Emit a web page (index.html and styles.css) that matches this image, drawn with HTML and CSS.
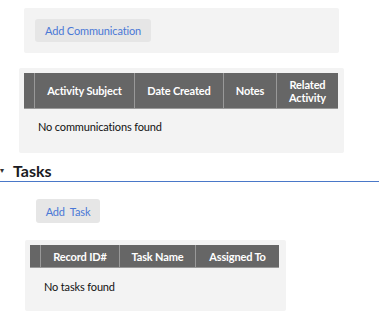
FILE: index.html
```html
<!DOCTYPE html>
<html>

<head>
    <link rel="stylesheet" href="styles.css">
</head>

<body>
    <div class="panel comm-actions">
        <button class="btn-add">Add Communication</button>
    </div>

    <div class="panel comm-table">
        <table class="grid">
            <tr class="grid-head">
                <th class="col-sel"></th>
                <th class="col-subject">Activity Subject</th>
                <th class="col-date">Date Created</th>
                <th class="col-notes">Notes</th>
                <th class="col-related">Related<br>Activity</th>
            </tr>
        </table>
        <div class="empty">No communications found</div>
    </div>

    <div class="section-title">
        <span class="caret">&#9662;</span>
        <span class="title-text">Tasks</span>
    </div>

    <div class="task-actions">
        <button class="btn-add">Add&nbsp; Task</button>
    </div>

    <div class="panel task-table">
        <table class="grid">
            <tr class="grid-head">
                <th class="col-sel"></th>
                <th class="col-record">Record ID#</th>
                <th class="col-name">Task Name</th>
                <th class="col-assigned">Assigned To</th>
            </tr>
        </table>
        <div class="empty">No tasks found</div>
    </div>
</body>

</html>
```

FILE: styles.css
```css
body {
    margin: 0;
    font-family: Lato, "Noto Sans", sans-serif;
    font-size: 11px;
    letter-spacing: -0.15px;
    color: #222;
    background: #fff;
}

.panel {
    background-color: #f3f3f3;
    border-radius: 2px;
}

.comm-actions {
    margin: 8px 0 0 24px;
    width: 315px;
    height: 45px;
    padding: 11px;
    box-sizing: border-box;
}

.btn-add {
    height: 23px;
    padding: 0 9px;
    border: none;
    border-radius: 3px;
    background-color: #e6e6e6;
    color: #4a78d6;
    font-family: Lato, "Noto Sans", sans-serif;
    font-size: 11px;
    letter-spacing: -0.15px;
    white-space: nowrap;
}

.comm-actions .btn-add {
    width: 116px;
}

.comm-table {
    margin: 15px 0 0 19px;
    width: 325px;
    height: 85px;
    padding: 5px 6px 0 5px;
    box-sizing: border-box;
}

.grid {
    border-collapse: collapse;
    width: 100%;
}

.grid-head th {
    background-color: #666;
    color: #fff;
    font-weight: bold;
    font-size: 11px;
    line-height: 13px;
    padding: 0;
    text-align: center;
    border-left: 1px solid #999;
    border-bottom: 1px solid #999;
}

.grid-head th:first-child {
    border-left: none;
}

.comm-table .grid-head th {
    height: 35px;
}

.col-sel {
    width: 10px;
}

.col-subject {
    width: 99px;
}

.col-date {
    width: 88px;
}

.col-notes {
    width: 52px;
}

.empty {
    padding: 11px 0 0 14px;
    color: #111;
}

.section-title {
    margin-top: 7px;
    height: 22px;
    border-bottom: 1px solid #4a78c8;
    display: flex;
    align-items: flex-end;
    box-sizing: border-box;
    padding-bottom: 1px;
}

.caret {
    font-size: 8px;
    color: #333;
    width: 13px;
    margin-bottom: 5px;
}

.title-text {
    font-size: 16px;
    line-height: 19px;
    font-weight: bold;
    letter-spacing: 0;
    color: #1a1a22;
}

.task-actions {
    padding: 17px 0 0 36px;
}

.task-actions .btn-add {
    width: 64px;
    height: 24px;
}

.task-table {
    margin: 17px 0 0 25px;
    width: 261px;
    height: 71px;
    padding: 5px 7px 0 5px;
    box-sizing: border-box;
}

.task-table .grid-head th {
    height: 22px;
}

.task-table .empty {
    padding-top: 12px;
}

.col-record {
    width: 78px;
}

.col-name {
    width: 75px;
}
```
